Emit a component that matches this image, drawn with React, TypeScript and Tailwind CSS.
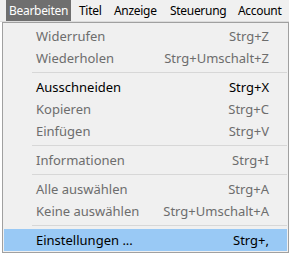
import React from "react";

type Item =
  | { type: "item"; label: string; shortcut: string; enabled?: boolean; active?: boolean }
  | { type: "sep" };

const items: Item[] = [
  { type: "item", label: "Widerrufen", shortcut: "Strg+Z" },
  { type: "item", label: "Wiederholen", shortcut: "Strg+Umschalt+Z" },
  { type: "sep" },
  { type: "item", label: "Ausschneiden", shortcut: "Strg+X", enabled: true },
  { type: "item", label: "Kopieren", shortcut: "Strg+C" },
  { type: "item", label: "Einfügen", shortcut: "Strg+V" },
  { type: "sep" },
  { type: "item", label: "Informationen", shortcut: "Strg+I" },
  { type: "sep" },
  { type: "item", label: "Alle auswählen", shortcut: "Strg+A" },
  { type: "item", label: "Keine auswählen", shortcut: "Strg+Umschalt+A" },
  { type: "sep" },
  { type: "item", label: "Einstellungen ...", shortcut: "Strg+,", enabled: true, active: true },
];

export default function App() {
  return (
    <div
      className="relative w-[289px] h-[255px] overflow-hidden bg-white text-[13px] leading-none"
      style={{ fontFamily: '"Noto Sans", "Open Sans", sans-serif' }}
    >
      {/* menu bar */}
      <div className="flex h-[22px] bg-[#f0f0f0] border-b border-[#dcdcdc] text-black text-[12px] tracking-[-0.3px] whitespace-nowrap">
        <div className="ml-[6px] w-[65px] h-[21px] flex items-center pl-[3px] bg-[#6f6f6f] text-white">
          Bearbeiten
        </div>
        <div className="w-[35px] flex items-center pl-[8px]">Titel</div>
        <div className="w-[56px] flex items-center pl-[8px]">Anzeige</div>
        <div className="w-[68px] flex items-center pl-[8px]">Steuerung</div>
        <div className="flex items-center pl-[8px]">Account</div>
      </div>

      {/* dropdown */}
      <div className="absolute left-[2px] top-[22px] w-[287px] bg-[#f0f0f0] border border-[#a0a0a0] pt-[2px] pb-[1px] px-[1px]">
        {items.map((it, i) =>
          it.type === "sep" ? (
            <div key={i} className="h-[7px] flex items-center pl-[28px]">
              <div className="h-px w-full bg-[#d7d7d7]" />
            </div>
          ) : (
            <div
              key={i}
              className={`h-[22px] flex items-center justify-between pl-[32px] pr-[18px] ${
                it.active ? "bg-[#99c9f5]" : ""
              } ${it.enabled ? "text-black" : "text-[#6d6d6d]"}`}
            >
              <span>{it.label}</span>
              <span>{it.shortcut}</span>
            </div>
          )
        )}
      </div>
    </div>
  );
}
